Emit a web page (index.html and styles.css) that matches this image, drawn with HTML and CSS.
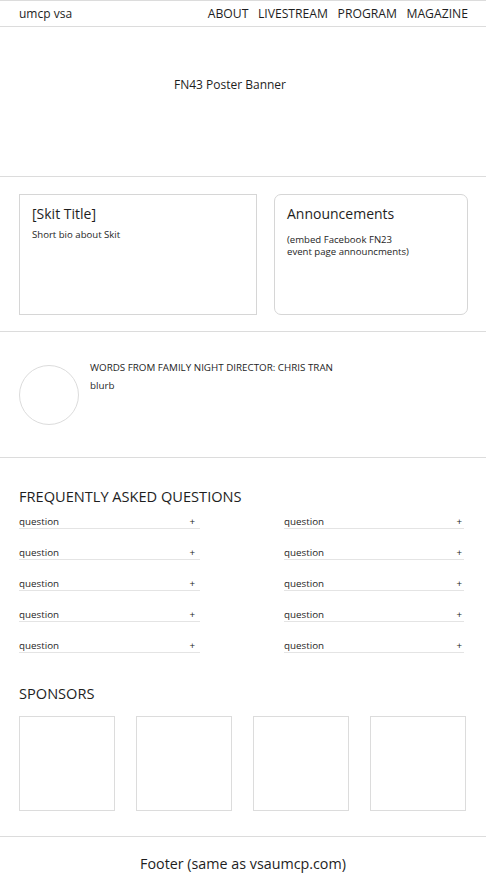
FILE: index.html
```html
<!DOCTYPE html>
<html>
<head>
<meta charset="utf-8">
<link rel="stylesheet" href="styles.css">
</head>
<body>
<header class="nav">
  <div class="brand">umcp vsa</div>
  <nav class="links">
    <span>ABOUT</span><span>LIVESTREAM</span><span>PROGRAM</span><span>MAGAZINE</span>
  </nav>
</header>
<section class="banner">FN43 Poster Banner</section>
<section class="cards">
  <div class="card skit">
    <div class="card-title">[Skit Title]</div>
    <div class="card-text">Short bio about Skit</div>
  </div>
  <div class="card announce">
    <div class="card-title">Announcements</div>
    <div class="card-text gap">(embed Facebook FN23<br>event page announcments)</div>
  </div>
</section>
<section class="director">
  <div class="avatar"></div>
  <div class="dir-text">
    <div class="dir-title">WORDS FROM FAMILY NIGHT DIRECTOR: CHRIS TRAN</div>
    <div class="dir-blurb">blurb</div>
  </div>
</section>
<section class="faq">
  <h2 class="heading">FREQUENTLY ASKED QUESTIONS</h2>
  <div class="faq-grid">
    <div class="q left"><span>question</span><span>+</span></div>
    <div class="q"><span>question</span><span>+</span></div>
    <div class="q left"><span>question</span><span>+</span></div>
    <div class="q"><span>question</span><span>+</span></div>
    <div class="q left"><span>question</span><span>+</span></div>
    <div class="q"><span>question</span><span>+</span></div>
    <div class="q left"><span>question</span><span>+</span></div>
    <div class="q"><span>question</span><span>+</span></div>
    <div class="q left"><span>question</span><span>+</span></div>
    <div class="q"><span>question</span><span>+</span></div>
  </div>
  <h2 class="heading sponsors-h">SPONSORS</h2>
  <div class="sponsors">
    <div class="logo"></div><div class="logo"></div><div class="logo"></div><div class="logo"></div>
  </div>
</section>
<footer class="footer">Footer (same as vsaumcp.com)</footer>
</body>
</html>
```
FILE: styles.css
```css
html, body {
  margin: 0;
  padding: 0;
  background: #fff;
}
body {
  font-family: "Open Sans", "Noto Sans", sans-serif;
  color: #1e1e1e;
  width: 486px;
}
.nav {
  display: flex;
  justify-content: space-between;
  align-items: center;
  height: 25px;
  padding: 0 18px 0 19px;
  border-top: 1px solid #dcdcdc;
  border-bottom: 1px solid #dcdcdc;
  font-size: 12px;
}
.links {
  display: flex;
  gap: 9.5px;
  font-size: 12.2px;
}
.banner {
  height: 150px;
  box-sizing: border-box;
  padding: 49px 26px 0 0;
  text-align: center;
  font-size: 12px;
  border-bottom: 1px solid #dcdcdc;
}
.cards {
  display: flex;
  gap: 17px;
  padding: 17px 18px 16px 19px;
  border-bottom: 1px solid #dcdcdc;
}
.card {
  height: 121px;
  box-sizing: border-box;
  border: 1px solid #d6d6d6;
  padding: 9px 12px;
}
.skit {
  width: 238px;
}
.announce {
  width: 194px;
  border-radius: 7px;
}
.card-title {
  font-size: 14px;
  line-height: 20px;
}
.card-text {
  font-size: 9.6px;
  line-height: 12px;
  margin-top: 5px;
}
.card-text.gap {
  margin-top: 10px;
}
.director {
  display: flex;
  align-items: flex-start;
  gap: 11px;
  height: 126px;
  box-sizing: border-box;
  padding: 30px 19px 0;
  border-bottom: 1px solid #dcdcdc;
}
.avatar {
  width: 58px;
  height: 58px;
  border: 1px solid #dcdcdc;
  border-radius: 50%;
  margin-top: 3px;
}
.dir-title {
  font-size: 9.8px;
  line-height: 12px;
}
.dir-blurb {
  font-size: 9.8px;
  line-height: 12px;
  margin-top: 6px;
}
.faq {
  padding: 29px 19px 25px;
  border-bottom: 1px solid #dcdcdc;
}
.heading {
  margin: 0;
  font-weight: normal;
  font-size: 14.6px;
  line-height: 18px;
}
.faq-grid {
  display: grid;
  grid-template-columns: 181px 180px;
  justify-content: space-between;
  row-gap: 18px;
  margin-top: 11px;
  padding-right: 3px;
}
.q {
  display: flex;
  justify-content: space-between;
  font-size: 9.8px;
  line-height: 11px;
  padding: 0 2px 1px 0;
  border-bottom: 1px solid #e4e4e4;
}
.q.left {
  padding-right: 5px;
}
.sponsors-h {
  margin-top: 31px;
}
.sponsors {
  display: flex;
  justify-content: space-between;
  margin-top: 14px;
  padding-right: 1px;
}
.logo {
  width: 94px;
  height: 93px;
  border: 1px solid #dcdcdc;
}
.footer {
  text-align: center;
  font-size: 14.3px;
  padding-top: 17px;
}
```
